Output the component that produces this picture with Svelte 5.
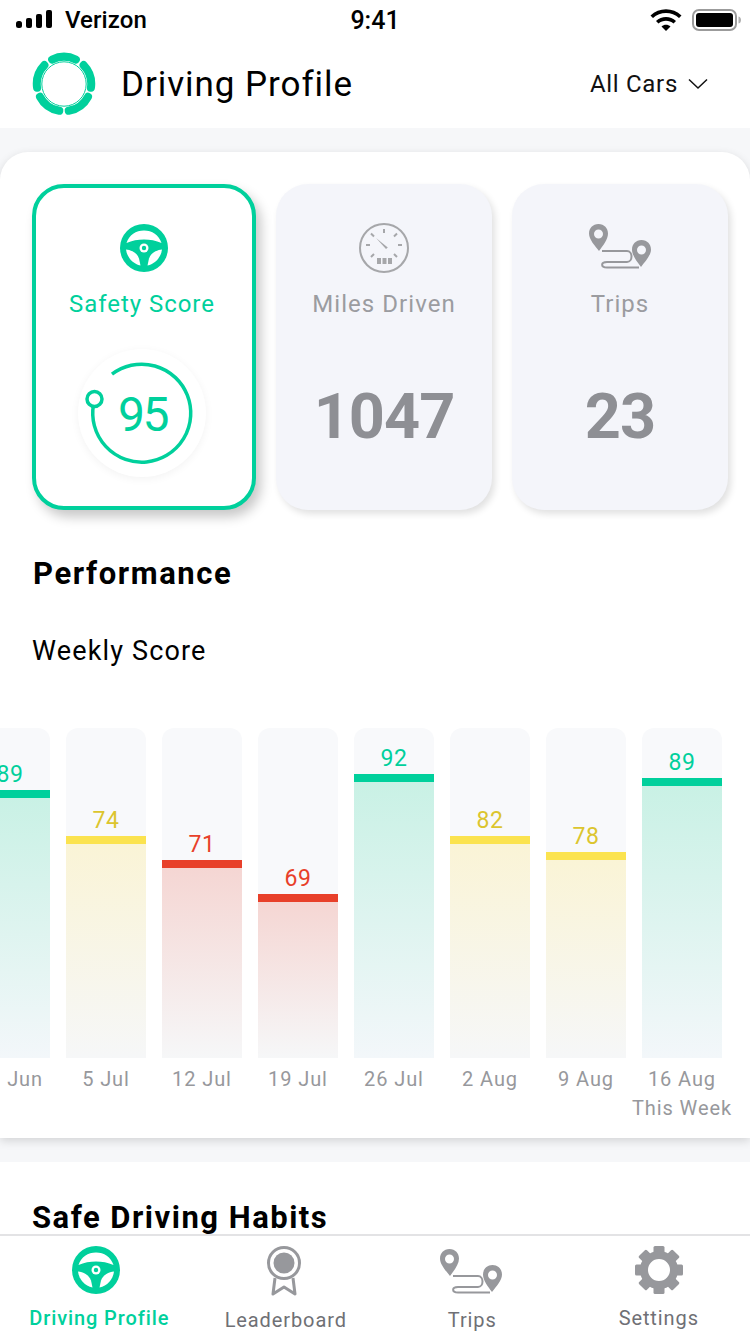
<script>
  const green = "#00d09c";
  const weeks = [
    { score: 89, top: 790, label: "28 Jun" },
    { score: 74, top: 836, label: "5 Jul" },
    { score: 71, top: 860, label: "12 Jul" },
    { score: 69, top: 894, label: "19 Jul" },
    { score: 92, top: 774, label: "26 Jul" },
    { score: 82, top: 836, label: "2 Aug" },
    { score: 78, top: 852, label: "9 Aug" },
    { score: 89, top: 778, label: "16 Aug", note: "This Week" }
  ];

  function level(score) {
    if (score >= 85) return "good";
    if (score >= 72) return "fair";
    return "poor";
  }

  // one petal of the logo, as an arc around (32,32)
  function petal(center) {
    const a = ((center - 26) * Math.PI) / 180;
    const b = ((center + 26) * Math.PI) / 180;
    const r = 27.2;
    const p = (t) => `${(32 + r * Math.cos(t)).toFixed(2)} ${(32 + r * Math.sin(t)).toFixed(2)}`;
    return `M${p(a)}A${r} ${r} 0 0 1 ${p(b)}`;
  }
</script>

{#snippet wheel()}
  <svg class="icon48" viewBox="0 0 48 48">
    <circle cx="24" cy="24" r="24" fill={green} />
    <path d="M6.500 19C9 11 16 6.500 24 6.500S39 11 41.500 19C36 16.500 30 15.500 24 15.500S12 16.500 6.500 19Z" fill="#fff" />
    <path d="M6 25.500C11 26 17 28.500 19 34.500L20.500 41.500C13 40 7 33.500 6 25.500Z" fill="#fff" />
    <path d="M42 25.500C37 26 31 28.500 29 34.500L27.500 41.500C35 40 41 33.500 42 25.500Z" fill="#fff" />
    <circle cx="24" cy="24" r="4.500" fill="#fff" />
    <circle cx="24" cy="24" r="2.200" fill={green} />
  </svg>
{/snippet}

{#snippet route()}
  <svg class="route" viewBox="0 0 64 48">
    <path fill-rule="evenodd" d="M10.500 0C4.700 0 1 4.300 1 9.500C1 15.500 7 22 11 27C15 21.500 20 15.500 20 9.500C20 4.300 16.300 0 10.500 0ZM10.500 5.500A4.500 4.500 0 1 1 10.500 14.500A4.500 4.500 0 1 1 10.500 5.500Z" fill="#97989c" />
    <path fill-rule="evenodd" d="M53.500 16C47.700 16 44 20.300 44 25.500C44 31.500 49 37.500 53 43C57 37.500 63 31.500 63 25.500C63 20.300 59.300 16 53.500 16ZM53.500 21.500A4.500 4.500 0 1 1 53.500 30.500A4.500 4.500 0 1 1 53.500 21.500Z" fill="#97989c" />
    <path d="M14 27H39C45 27 45 38 39 38H19C12.500 38 12.500 43.500 19 43.500H51" fill="none" stroke="#97989c" stroke-width="2" />
  </svg>
{/snippet}

<div class="page">
  <div class="status">
    <div class="status-left">
      <svg width="36" height="20" viewBox="0 0 36 20">
        <rect x="0" y="11" width="6" height="7" rx="2.500" fill="#000" />
        <rect x="10" y="8" width="6" height="10" rx="2" fill="#000" />
        <rect x="20" y="4" width="6" height="14" rx="2" fill="#000" />
        <rect x="30" y="0" width="6" height="18" rx="2" fill="#000" />
      </svg>
      <span>Verizon</span>
    </div>
    <div class="status-time">9:41</div>
    <div class="status-right">
      <svg width="32" height="24" viewBox="0 0 32 24">
        <path d="M0.500 7.500C9 -1 23 -1 31.500 7.500L29 10C21.800 3.300 10.200 3.300 3 10Z" fill="#000" />
        <path d="M6 13C11.500 7.800 20.500 7.800 26 13L23.500 15.500C19.300 11.800 12.700 11.800 8.500 15.500Z" fill="#000" />
        <path d="M11.500 18.500C14 16.300 18 16.300 20.500 18.500L16 23Z" fill="#000" />
      </svg>
      <svg width="50" height="24" viewBox="0 0 50 24">
        <rect x="1" y="2" width="43" height="20" rx="6" fill="none" stroke="#9b9b9b" stroke-width="2" />
        <rect x="4" y="5" width="37" height="14" rx="3" fill="#000" />
        <path d="M46.500 8.500C48.500 9 49 10.500 49 12S48.500 15 46.500 15.500Z" fill="#b0b0b0" />
      </svg>
    </div>
  </div>

  <header class="header">
    <div class="brand">
      <svg width="64" height="64" viewBox="0 0 64 64">
        {#each [270, 342, 54, 126, 198] as c}
          <path d={petal(c)} fill="none" stroke={green} stroke-width="8" stroke-linecap="round" />
        {/each}
        <circle cx="32" cy="32" r="22.200" fill="none" stroke={green} stroke-width="1" />
      </svg>
      <h1>Driving Profile</h1>
    </div>
    <div class="filter">
      <span>All Cars</span>
      <svg width="20" height="12" viewBox="0 0 20 12">
        <path d="M1 1.500L10 10L19 1.500" fill="none" stroke="#111" stroke-width="1.500" />
      </svg>
    </div>
  </header>

  <main class="panel">
    <div class="cards">
      <section class="card active">
        {@render wheel()}
        <h2>Safety Score</h2>
        <div class="gauge">
          <svg class="ring" width="104" height="104" viewBox="0 0 104 104">
            <path d="M22 13.200A49 49 0 1 1 3.500 43.500" fill="none" stroke={green} stroke-width="3.500" />
            <circle cx="4.500" cy="38" r="7.500" fill="#fff" stroke={green} stroke-width="3.500" />
          </svg>
          <span class="gauge-value">95</span>
        </div>
      </section>

      <section class="card miles">
        <svg class="icon48 gray" viewBox="0 0 50 50">
          <circle cx="25" cy="25" r="24" fill="none" stroke="#a6a7aa" stroke-width="2" />
          <path d="M25 6V10M12 10.500L15 13.500M38 10.500L35 13.500M7 22H11M39 22H43M12 34L15 31M38 34L35 31" stroke="#a6a7aa" stroke-width="2" fill="none" />
          <path d="M17 15L27 26L28.800 24.400Z" fill="#a6a7aa" />
          <rect x="18" y="35" width="4" height="6" fill="#a6a7aa" />
          <rect x="23.500" y="35" width="4" height="6" fill="#a6a7aa" />
          <rect x="29" y="35" width="4" height="6" fill="#a6a7aa" />
        </svg>
        <h2>Miles Driven</h2>
        <div class="stat">1047</div>
      </section>

      <section class="card trips">
        {@render route()}
        <h2>Trips</h2>
        <div class="stat">23</div>
      </section>
    </div>

    <h3 class="section-title">Performance</h3>
    <div class="subtitle">Weekly Score</div>

    <div class="chart">
      {#each weeks as week}
        <div class="week">
          <div class="track {level(week.score)}">
            <span class="score">{week.score}</span>
            <div class="fill" style="height: {1058 - week.top}px"></div>
          </div>
          <div class="label">{week.label}</div>
          {#if week.note}<div class="label note">{week.note}</div>{/if}
        </div>
      {/each}
    </div>
  </main>

  <section class="habits">
    <h3>Safe Driving Habits</h3>
  </section>

  <nav class="tabs">
    <div class="tab on">
      <div class="tab-icon wheel-icon">{@render wheel()}</div>
      <span>Driving Profile</span>
    </div>
    <div class="tab">
      <div class="tab-icon medal-icon">
        <svg width="36" height="50" viewBox="0 0 36 50">
          <path d="M9 32L7 48L18 41L29 48L27 32" fill="none" stroke="#97989c" stroke-width="3" stroke-linejoin="round" />
          <circle cx="18" cy="17" r="15.500" fill="#fff" stroke="#97989c" stroke-width="3" />
          <circle cx="18" cy="17" r="10.500" fill="#97989c" />
        </svg>
      </div>
      <span>Leaderboard</span>
    </div>
    <div class="tab">
      <div class="tab-icon route-icon">{@render route()}</div>
      <span>Trips</span>
    </div>
    <div class="tab">
      <div class="tab-icon">
        <svg class="icon48" viewBox="0 0 48 48">
          <g fill="#97989c">
            {#each [0, 45, 90, 135] as r}
              <rect x="18.500" y="0" width="11" height="48" rx="1.500" transform="rotate({r} 24 24)" />
            {/each}
          </g>
          <circle cx="24" cy="24" r="15" fill="#fff" stroke="#97989c" stroke-width="8" />
        </svg>
      </div>
      <span>Settings</span>
    </div>
  </nav>
</div>

<style>
  :global(body) {
    margin: 0;
    background: #fff;
  }

  .page {
    position: relative;
    width: 750px;
    height: 1334px;
    overflow: hidden;
    background: #f6f7f9;
    font-family: Roboto, "Liberation Sans", sans-serif;
    color: #000;
  }

  .status {
    height: 40px;
    padding: 0 12px;
    display: grid;
    grid-template-columns: 1fr auto 1fr;
    align-items: center;
    background: #fff;
    font-size: 24px;
    font-weight: 500;
  }

  .status-left {
    display: flex;
    align-items: center;
    gap: 13px;
    padding-left: 4px;
    letter-spacing: 0.1px;
  }

  .status-time {
    font-size: 25px;
  }

  .status-right {
    display: flex;
    justify-content: flex-end;
    align-items: center;
    gap: 10px;
    margin-right: -4px;
  }

  .header {
    height: 88px;
    padding: 0 42px 0 32px;
    display: flex;
    justify-content: space-between;
    align-items: center;
    background: #fff;
  }

  .brand {
    display: flex;
    align-items: center;
    gap: 25px;
  }

  h1 {
    margin: 0;
    font-size: 35px;
    font-weight: 400;
    letter-spacing: 0.95px;
  }

  .filter {
    display: flex;
    align-items: center;
    gap: 10px;
    font-size: 24px;
    letter-spacing: 0.7px;
    color: #111;
  }

  .panel {
    margin-top: 24px;
    height: 986px;
    box-sizing: border-box;
    padding-top: 32px;
    background: #fff;
    border-radius: 28px 28px 0 0;
    box-shadow: 0 3px 10px rgba(0, 0, 0, 0.14);
  }

  .cards {
    display: flex;
    padding-left: 32px;
  }

  .card {
    box-sizing: border-box;
    height: 326px;
    padding-top: 40px;
    display: flex;
    flex-direction: column;
    align-items: center;
    border-radius: 32px;
    background: #f4f5fa;
    box-shadow: 3px 4px 7px rgba(0, 0, 0, 0.12);
  }

  .card.active {
    width: 224px;
    padding-top: 36px;
    background: #fff;
    border: 4px solid #00d09c;
    box-shadow: 5px 7px 12px rgba(0, 0, 0, 0.22);
  }

  .card.miles,
  .card.trips {
    width: 216px;
    margin-left: 20px;
  }

  .icon48 {
    width: 48px;
    height: 48px;
    display: block;
  }

  .icon48.gray {
    width: 50px;
    height: 50px;
    margin-top: -1px;
    margin-bottom: -1px;
  }

  .route {
    width: 64px;
    height: 48px;
    display: block;
  }

  h2 {
    margin: 17px 0 0;
    height: 30px;
    line-height: 30px;
    font-size: 24px;
    font-weight: 400;
    letter-spacing: 1.05px;
    color: #9b9ca0;
  }

  .active h2 {
    margin-left: -4px;
    letter-spacing: 0.95px;
    color: #00d09c;
  }

  .gauge {
    position: relative;
    width: 128px;
    height: 128px;
    margin-top: 30px;
    margin-left: -4px;
    display: flex;
    align-items: center;
    justify-content: center;
    border-radius: 50%;
    background: #fff;
    box-shadow: 0 2px 8px rgba(0, 0, 0, 0.05);
  }

  .ring {
    overflow: visible;
  }

  .gauge-value {
    position: absolute;
    top: 36px;
    left: 40px;
    line-height: 60px;
    font-size: 48px;
    font-weight: 400;
    letter-spacing: -2.5px;
    color: #00d09c;
  }

  .stat {
    margin-top: 60px;
    line-height: 76px;
    font-size: 63px;
    font-weight: 700;
    letter-spacing: -1px;
    color: #8e8f94;
  }

  .section-title {
    margin: 45px 0 0 33px;
    line-height: 38px;
    font-size: 31px;
    font-weight: 700;
    letter-spacing: 1.6px;
  }

  .subtitle {
    margin: 40px 0 0 32px;
    line-height: 36px;
    font-size: 27px;
    letter-spacing: 1.15px;
  }

  .chart {
    margin-top: 59px;
    padding-right: 28px;
    display: flex;
    justify-content: flex-end;
    gap: 16px;
    overflow: hidden;
  }

  .week {
    flex: 0 0 80px;
    min-width: 0;
    display: flex;
    flex-direction: column;
    align-items: center;
  }

  .track {
    width: 80px;
    height: 330px;
    display: flex;
    flex-direction: column;
    justify-content: flex-end;
    align-items: center;
    border-radius: 12px 12px 0 0;
    background: #f8f9fb;
    overflow: hidden;
  }

  .score {
    line-height: 28px;
    margin-bottom: 1px;
    font-size: 23px;
    letter-spacing: 0.5px;
  }

  .fill {
    width: 100%;
    box-sizing: border-box;
    border-top: 8px solid;
  }

  .good .score {
    color: #00d09c;
  }

  .good .fill {
    border-color: #00d09c;
    background: linear-gradient(#c9f1e5, #f3f7fa);
  }

  .fair .score {
    color: #dcc52e;
  }

  .fair .fill {
    border-color: #fbe34f;
    background: linear-gradient(#faf4d6, #f6f7f8);
  }

  .poor .score {
    color: #e8402a;
  }

  .poor .fill {
    border-color: #e8402a;
    background: linear-gradient(#f5d6d3, #f6f7f8);
  }

  .label {
    margin-top: 8px;
    line-height: 26px;
    font-size: 20px;
    letter-spacing: 0.9px;
    white-space: nowrap;
    color: #97989c;
  }

  .label.note {
    margin-top: 3px;
  }

  .habits {
    margin-top: 24px;
    height: 120px;
    box-sizing: border-box;
    padding: 37px 0 0 32px;
    background: #fff;
  }

  .habits h3 {
    margin: 0;
    line-height: 38px;
    font-size: 31px;
    font-weight: 700;
    letter-spacing: 1.5px;
  }

  .tabs {
    position: absolute;
    left: 0;
    right: 0;
    bottom: 0;
    height: 98px;
    padding-left: 6px;
    border-top: 2px solid #e3e3e5;
    background: #fff;
    display: grid;
    grid-template-columns: repeat(4, 186.5px);
  }

  .tab {
    display: flex;
    flex-direction: column;
    align-items: center;
    padding-top: 10px;
    height: 85px;
  }

  .tab-icon {
    height: 50px;
    display: flex;
    align-items: flex-start;
  }

  .wheel-icon {
    margin-left: -6px;
  }

  .medal-icon {
    margin-left: -4px;
  }

  .route-icon {
    margin-left: -2px;
    padding-top: 3px;
    box-sizing: border-box;
  }

  .tab > span {
    margin-top: 11px;
    line-height: 26px;
    font-size: 20px;
    letter-spacing: 0.9px;
    color: #6f7075;
    white-space: nowrap;
  }

  .tab.on > span {
    color: #00d09c;
    font-weight: 500;
  }
</style>
